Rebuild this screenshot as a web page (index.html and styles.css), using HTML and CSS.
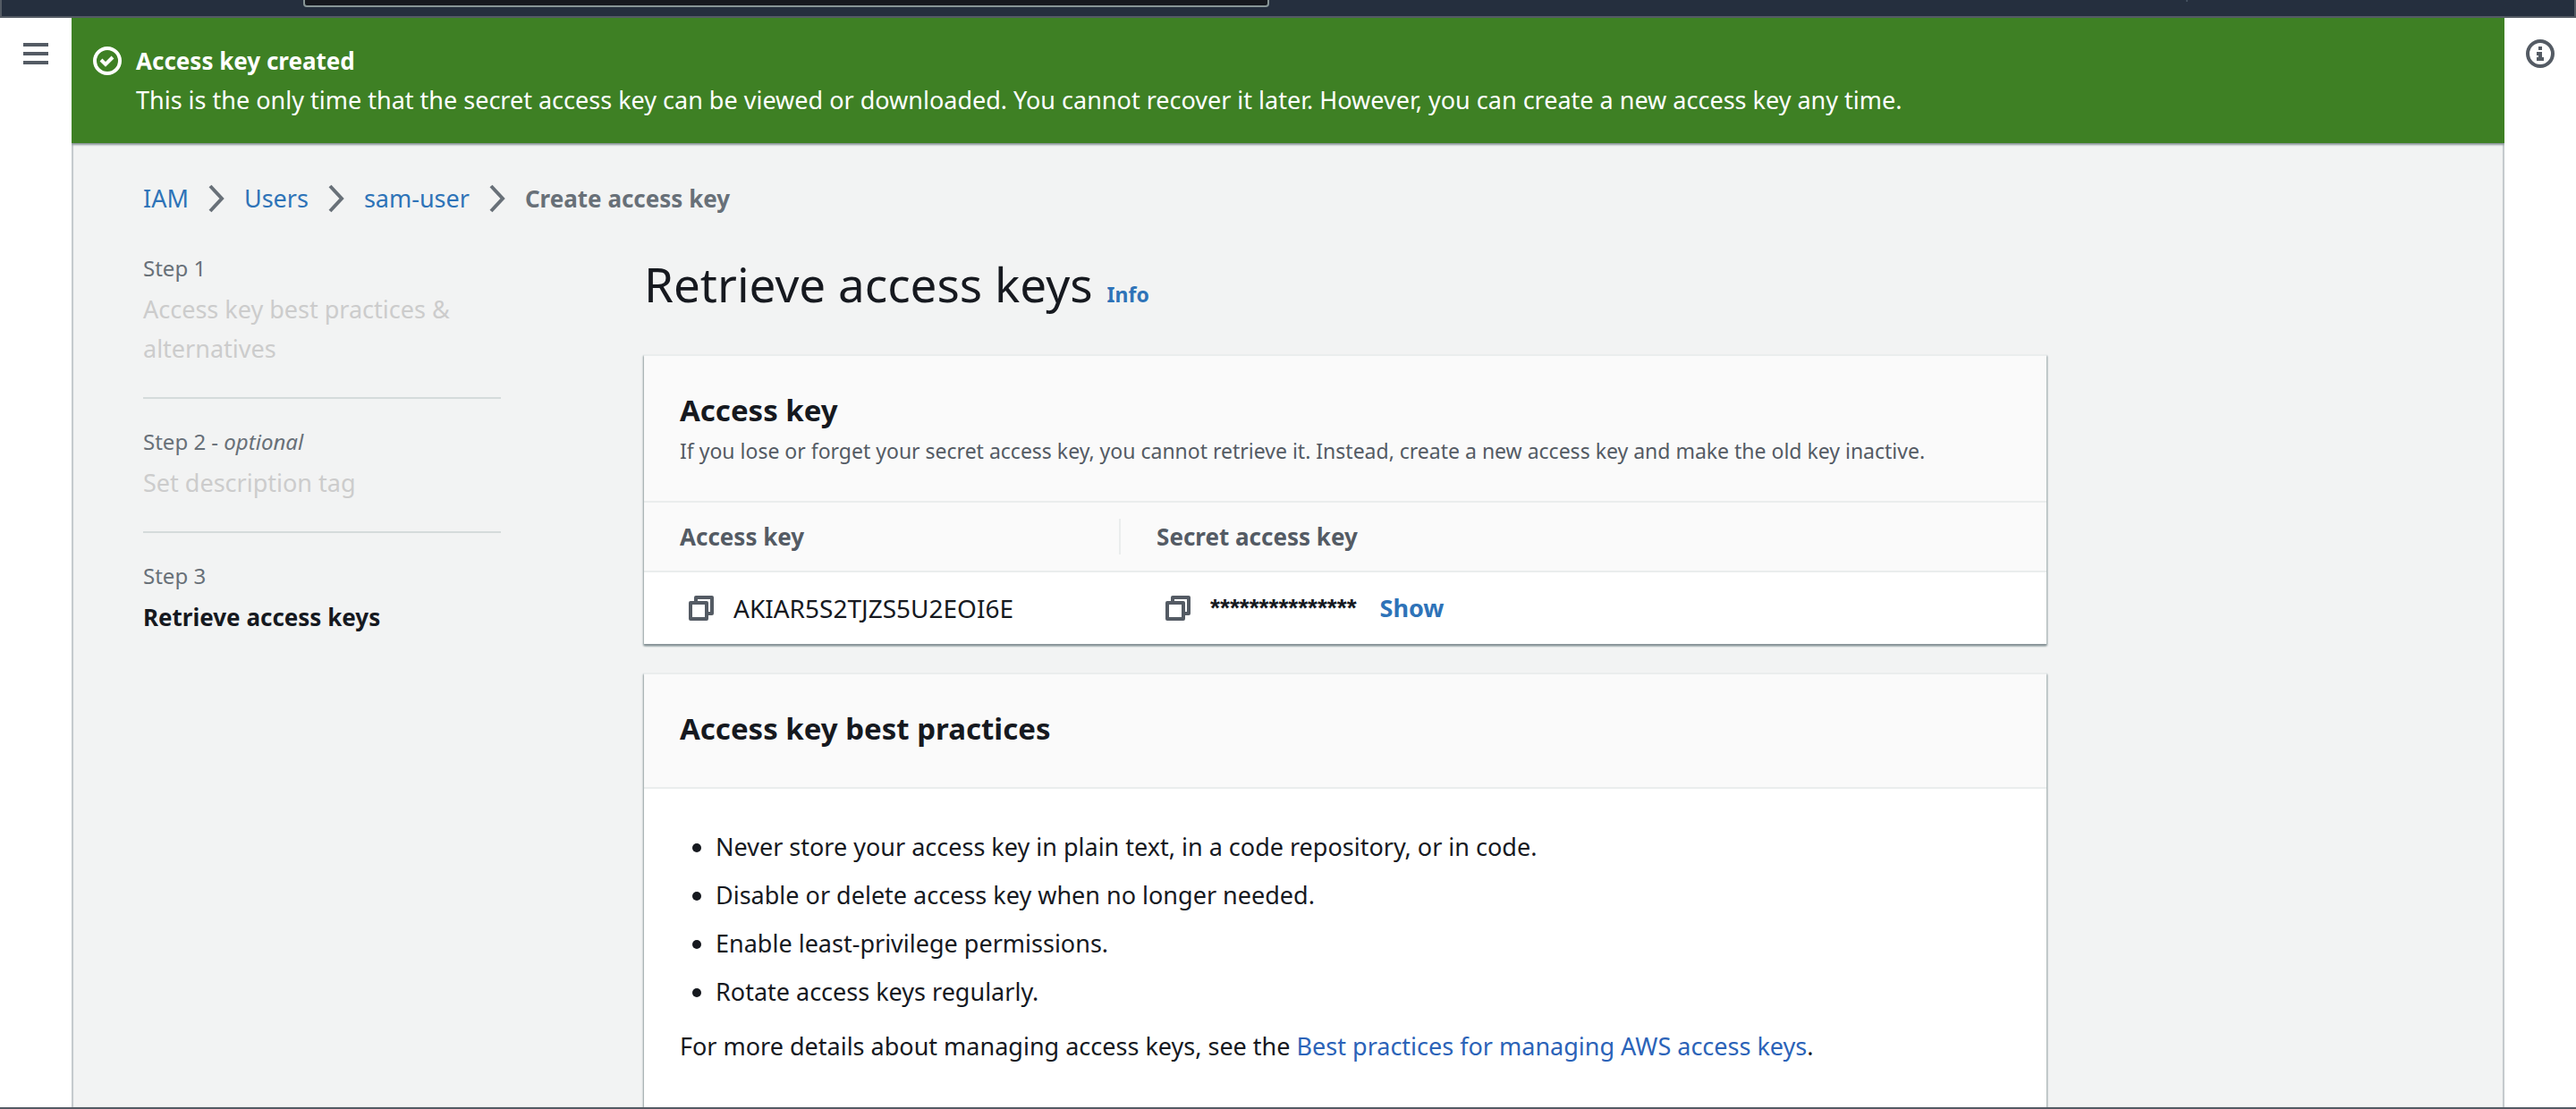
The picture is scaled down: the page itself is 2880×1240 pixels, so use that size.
FILE: index.html
```html
<!DOCTYPE html>
<html lang="en">
<head>
<meta charset="utf-8">
<title>Create access key | IAM</title>
<link rel="stylesheet" href="styles.css">
</head>
<body>
<div class="app">
  <header class="topbar">
    <input class="topbar-search" type="search" aria-label="Search">
    <span class="topbar-tick"></span>
  </header>

  <div class="shell">
    <div class="rail">
      <button class="icon-button" type="button" aria-label="Open navigation">
        <svg class="icon" viewBox="0 0 32 32"><path d="M2 6h28M2 16h28M2 26h28" fill="none" stroke="currentColor" stroke-width="4"/></svg>
      </button>
    </div>

    <main class="main">
      <div class="flash" role="status">
        <svg class="icon" viewBox="0 0 32 32" fill="none" stroke="currentColor" stroke-width="4"><circle cx="16" cy="16" r="14"/><path d="M9 15l5 5 8-8"/></svg>
        <div>
          <strong>Access key created</strong>
          <p>This is the only time that the secret access key can be viewed or downloaded. You cannot recover it later. However, you can create a new access key any time.</p>
        </div>
      </div>

      <div class="content">
        <nav class="breadcrumbs" aria-label="Breadcrumbs">
          <a href="#">IAM</a>
          <svg class="chevron" viewBox="0 0 18 32"><path d="M2 2l13 14L2 30" fill="none" stroke="currentColor" stroke-width="4"/></svg>
          <a href="#">Users</a>
          <svg class="chevron" viewBox="0 0 18 32"><path d="M2 2l13 14L2 30" fill="none" stroke="currentColor" stroke-width="4"/></svg>
          <a href="#">sam-user</a>
          <svg class="chevron" viewBox="0 0 18 32"><path d="M2 2l13 14L2 30" fill="none" stroke="currentColor" stroke-width="4"/></svg>
          <strong>Create access key</strong>
        </nav>

        <div class="wizard">
          <ol class="steps">
            <li><small>Step 1</small><span>Access key best practices &amp; alternatives</span></li>
            <li><small>Step 2 - <em>optional</em></small><span>Set description tag</span></li>
            <li class="current" aria-current="step"><small>Step 3</small><span>Retrieve access keys</span></li>
          </ol>

          <div class="form">
            <div class="title">
              <h1>Retrieve access keys</h1>
              <a class="info" href="#">Info</a>
            </div>

            <section class="card">
              <div class="card-header">
                <h2>Access key</h2>
                <p>If you lose or forget your secret access key, you cannot retrieve it. Instead, create a new access key and make the old key inactive.</p>
              </div>
              <table class="keys">
                <thead>
                  <tr><th scope="col"><div>Access key</div></th><th scope="col"><div>Secret access key</div></th></tr>
                </thead>
                <tbody>
                  <tr>
                    <td>
                      <div class="key">
                        <button class="icon-button" type="button" aria-label="Copy access key">
                          <svg class="icon" viewBox="0 0 32 32" fill="none" stroke="currentColor" stroke-width="4" stroke-linejoin="round"><path d="M4 10h18v18H4zM10 10V4h18v18h-6"/></svg>
                        </button>
                        <span class="key-id">AKIAR5S2TJZS5U2EOI6E</span>
                      </div>
                    </td>
                    <td>
                      <div class="key">
                        <button class="icon-button" type="button" aria-label="Copy secret access key">
                          <svg class="icon" viewBox="0 0 32 32" fill="none" stroke="currentColor" stroke-width="4" stroke-linejoin="round"><path d="M4 10h18v18H4zM10 10V4h18v18h-6"/></svg>
                        </button>
                        <span class="key-mask">***************</span>
                        <button class="show" type="button">Show</button>
                      </div>
                    </td>
                  </tr>
                </tbody>
              </table>
            </section>

            <section class="card">
              <div class="card-header">
                <h2>Access key best practices</h2>
              </div>
              <div class="card-body">
                <ul>
                  <li>Never store your access key in plain text, in a code repository, or in code.</li>
                  <li>Disable or delete access key when no longer needed.</li>
                  <li>Enable least-privilege permissions.</li>
                  <li>Rotate access keys regularly.</li>
                </ul>
                <p>For more details about managing access keys, see the <a href="#">Best practices for managing AWS access keys</a>.</p>
              </div>
            </section>
          </div>
        </div>
      </div>
    </main>

    <div class="rail">
      <button class="icon-button" type="button" aria-label="Open help panel">
        <svg class="icon" viewBox="0 0 32 32"><circle cx="16" cy="16" r="14" fill="none" stroke="currentColor" stroke-width="4"/><path d="M14 8h4v4h-4zM12 14h6v6h2v4h-8v-4h2v-2h-2z" fill="currentColor"/></svg>
      </button>
    </div>
  </div>
</div>
</body>
</html>
```

FILE: styles.css
```css
* { box-sizing: border-box; }

body {
  margin: 0;
  background: #fff;
  color: #16191f;
  font: 27px/44px "Noto Sans", sans-serif;
}

h1, h2, p, ul, ol { margin: 0; padding: 0; }
a { color: #2e73b8; text-decoration: none; }
strong, th { font-size: 26px; font-weight: 700; }

button {
  padding: 0;
  border: 0;
  background: none;
  color: #545b64;
  font: inherit;
  cursor: pointer;
}

.icon { display: block; width: 32px; height: 32px; }
.icon-button { display: block; flex: none; }

.app {
  display: flex;
  flex-direction: column;
  height: 100vh;
  overflow: hidden;
  border-bottom: 2px solid #545b64;
}

/* Only the lower edge of the bar is in view */
.topbar {
  display: flex;
  flex: none;
  align-items: flex-end;
  justify-content: space-between;
  height: 20px;
  padding: 0 432px 10px 337px;
  overflow: hidden;
  background: #252f3e;
  border: 2px solid #545b64;
  border-top: 0;
}

.topbar-search {
  flex: 0 1 1080px;
  height: 60px;
  border: 2px solid #879596;
  border-radius: 4px;
  background: #16191f;
  color: #fff;
  font: inherit;
}

.topbar-tick { align-self: flex-start; width: 2px; height: 2px; background: #414d5c; }

.shell { display: flex; flex: 1; min-height: 0; }
.rail { display: flex; flex: none; justify-content: center; width: 80px; padding-top: 24px; }
.rail .icon-button { align-self: flex-start; }

.main {
  flex: 1;
  min-width: 0;
  overflow: hidden;
  background: #f2f3f3;
  box-shadow: inset 2px 0 1px #c3c8cb, inset -2px 0 1px #c3c8cb;
}

.flash {
  display: flex;
  gap: 16px;
  padding: 26px 24px;
  background: #3e8024;
  color: #fff;
  box-shadow: 0 2px 2px #879196;
}

.flash .icon { flex: none; margin-top: 6px; }
.flash strong { display: block; }

.content { padding: 40px 80px 0; }
.breadcrumbs { display: flex; align-items: center; gap: 22px; color: #687078; }
.chevron { width: 18px; height: 32px; }

.wizard {
  display: grid;
  grid-template-columns: 400px minmax(0, 1568px);
  gap: 160px;
  padding-top: 36px;
}

.steps { list-style: none; }
.steps li + li { margin-top: 32px; padding-top: 28px; border-top: 2px solid #d5dbdb; }
.steps small { display: block; margin-bottom: 4px; color: #687078; font-size: 24px; line-height: 40px; }
.steps span { display: block; color: #ccc; }
.steps .current span { color: #16191f; font-size: 26px; font-weight: 700; }

.title { display: flex; align-items: baseline; gap: 16px; padding: 2px 0 42px; }
h1 { font-size: 53px; font-weight: 400; line-height: 72px; }
.info { font-size: 23px; font-weight: 700; }

.card {
  background: #fff;
  border-top: 2px solid #eaeded;
  box-shadow: 0 2px 2px #879196, 1px 2px 2px #aab7b8, -1px 2px 2px #aab7b8;
}

.card + .card { margin-top: 32px; }

.card-header {
  padding: 34px 40px 38px;
  background: #fafafa;
  border-bottom: 2px solid #eaeded;
}

h2 { font-size: 33px; font-weight: 700; line-height: 54px; }
.card-header p { color: #545b64; font-size: 23px; line-height: 36px; }

.keys { width: 100%; border-collapse: collapse; table-layout: fixed; text-align: left; }
.keys th { padding: 18px 0; background: #fafafa; border-bottom: 2px solid #eaeded; color: #545b64; }
.keys th:first-child { width: 34%; }
.keys th div { padding-left: 40px; line-height: 40px; }
.keys th:first-child div { border-right: 2px solid #eaeded; }
.keys td { padding: 18px 40px; }
.key { display: flex; align-items: center; gap: 20px; padding-left: 8px; }
.key-id { font-size: 28px; }
.key-mask { font-family: "Liberation Sans", sans-serif; font-size: 28px; font-weight: 700; }
.show { margin-left: 6px; color: #2e73b8; font-weight: 700; }

.card-body { padding: 38px 40px 80px; }
.card-body ul { padding: 0 0 12px 40px; }
.card-body li { line-height: 54px; }
.card-body a { color: #2b63b8; }
```
